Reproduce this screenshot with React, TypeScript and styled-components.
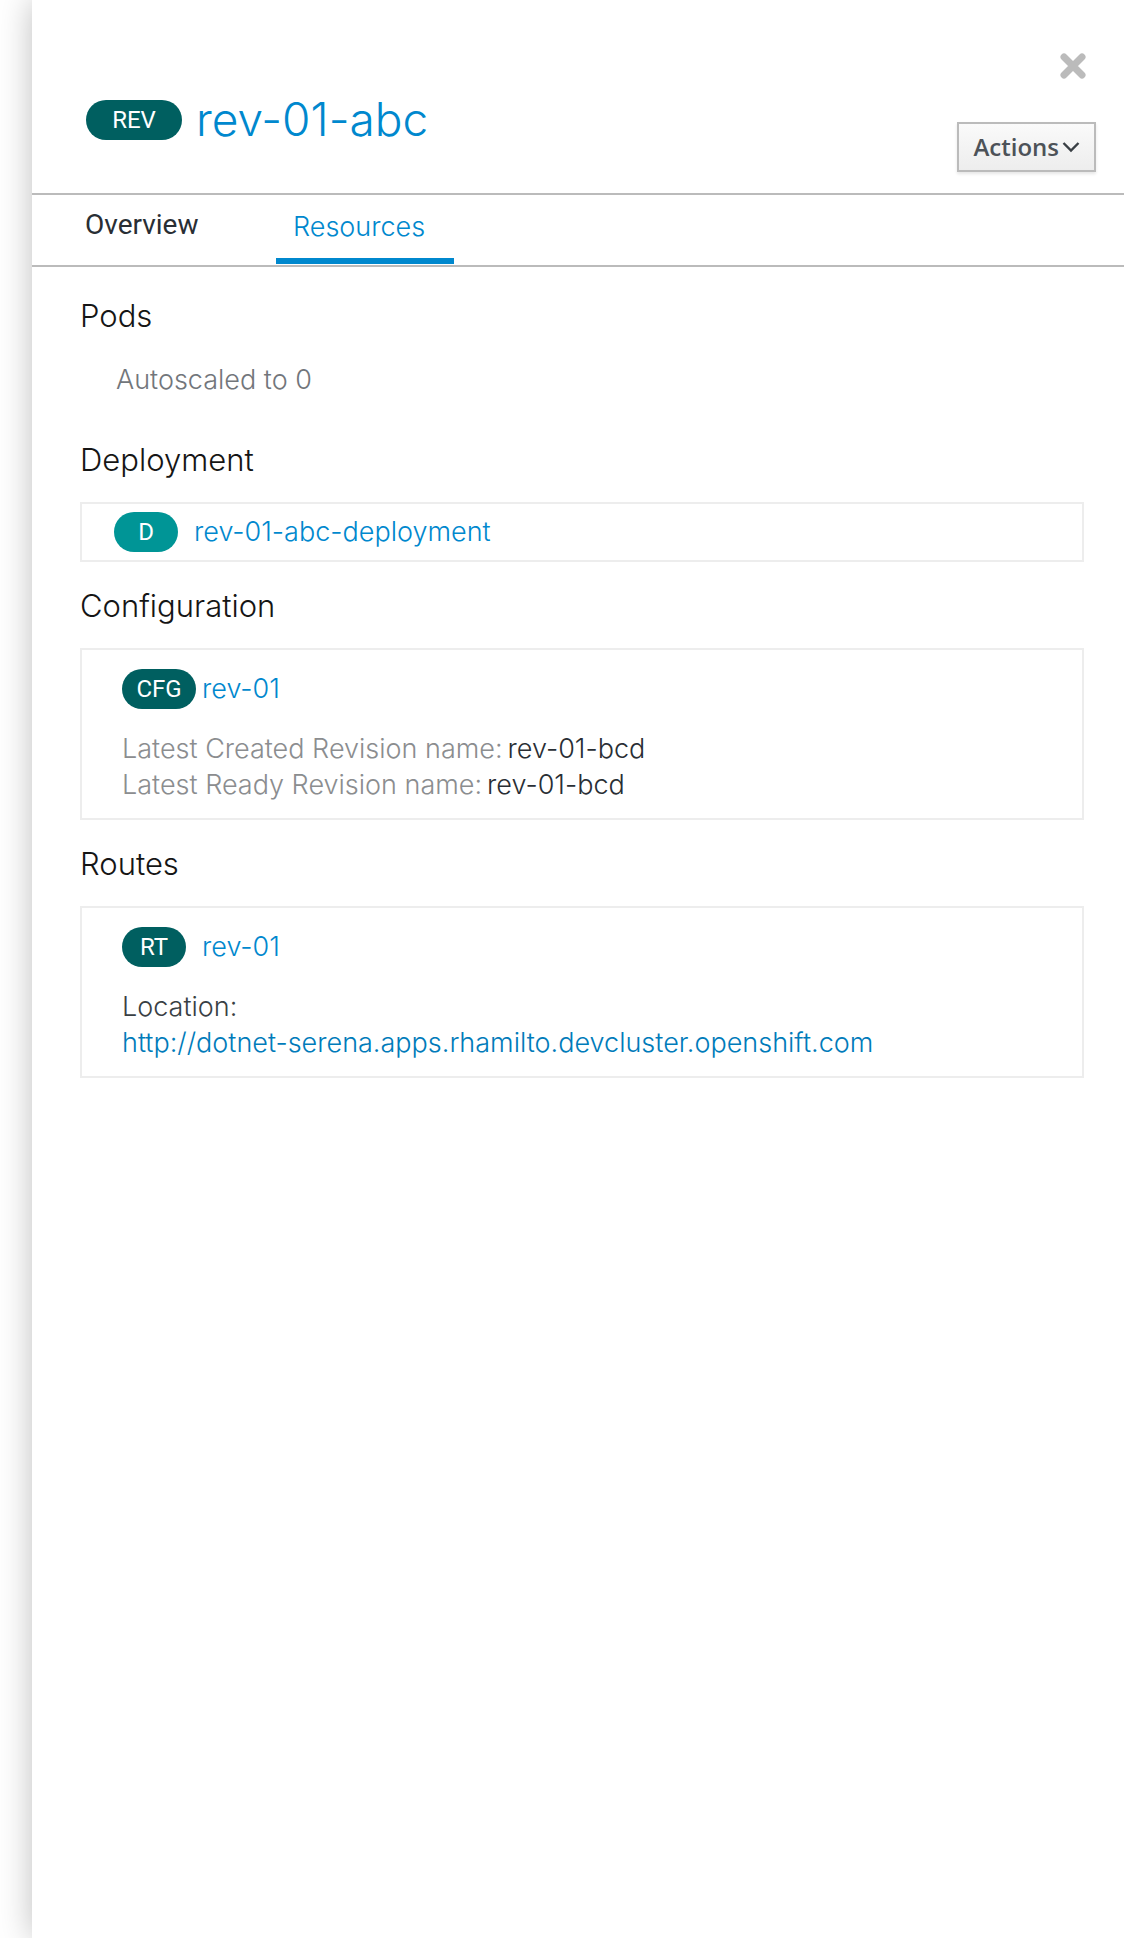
import React from "react";
import styled, { createGlobalStyle } from "styled-components";

const GlobalStyle = createGlobalStyle`
  *, *::before, *::after {
    box-sizing: border-box;
  }
  body {
    margin: 0;
    background: #fff;
    color: #151515;
    font-family: Inter, "Liberation Sans", sans-serif;
    font-weight: 300;
  }
  h1, h2, p, dl, dt, dd {
    margin: 0;
    font-weight: inherit;
  }
`;

const Page = styled.main`
  min-height: 100vh;
  padding-left: 32px;
  overflow: hidden;
`;

const Panel = styled.aside`
  min-height: 100vh;
  background: #fff;
  box-shadow: 0 0 32px rgba(0, 0, 0, 0.26);
`;

const Header = styled.header`
  display: flex;
  justify-content: space-between;
  padding: 53px 28px 21px 54px;
  border-bottom: 2px solid #bbb;
`;

const Heading = styled.div`
  display: flex;
  align-items: center;
  gap: 14px;
  height: 60px;
  margin-top: 37px;
`;

const Title = styled.h1`
  padding-bottom: 2px;
  color: #0088ce;
  font-size: 46px;
  line-height: 58px;
`;

const HeaderControls = styled.div`
  display: flex;
  flex-direction: column;
  align-items: flex-end;
  gap: 43px;
`;

const CloseButton = styled.button`
  display: flex;
  margin-right: 10px;
  padding: 0;
  border: 0;
  background: none;
  cursor: pointer;
`;

const ActionsButton = styled.button`
  display: flex;
  align-items: center;
  gap: 3px;
  height: 50px;
  padding: 0 14px;
  border: 2px solid #bbb;
  background: linear-gradient(#fafafa, #ededed);
  box-shadow: 0 2px 3px rgba(3, 3, 3, 0.1);
  color: #4d5258;
  font-family: "Open Sans", "Noto Sans", sans-serif;
  font-size: 24px;
  font-weight: 600;
  line-height: 32px;
  cursor: pointer;
`;

const Tabs = styled.nav`
  display: flex;
  align-items: stretch;
  gap: 30px;
  height: 72px;
  padding: 0 36px;
  border-bottom: 2px solid #bbb;
`;

const Tab = styled.a<{ $active?: boolean }>`
  display: block;
  min-width: 178px;
  padding: ${(p) => (p.$active ? "14px 17px 0" : "12px 17px 0")};
  border-bottom: 6px solid ${(p) => (p.$active ? "#0088ce" : "transparent")};
  margin-bottom: 1px;
  color: ${(p) => (p.$active ? "#0088ce" : "#292e34")};
  font-family: ${(p) => (p.$active ? "Inter" : "Roboto")}, sans-serif;
  font-size: ${(p) => (p.$active ? "27px" : "28px")};
  font-weight: ${(p) => (p.$active ? 300 : 400)};
  line-height: 36px;
  text-decoration: none;
`;

const Content = styled.div`
  display: flex;
  flex-direction: column;
  gap: 23px;
  padding: 28px 40px 40px 48px;
`;

const Section = styled.section`
  display: flex;
  flex-direction: column;
  gap: 21px;
`;

const SectionTitle = styled.h2`
  font-size: 31px;
  line-height: 42px;
`;

const PodStatus = styled.p`
  padding: 4px 36px 18px;
  color: #72767b;
  font-size: 27px;
  line-height: 36px;
`;

const Card = styled.div<{ $compact?: boolean }>`
  display: flex;
  flex-direction: column;
  gap: 22px;
  padding: ${(p) => (p.$compact ? "8px 32px" : "19px 40px 15px")};
  border: 2px solid #ededed;
`;

const ResourceName = styled.div<{ $tight?: boolean }>`
  display: flex;
  align-items: center;
  gap: ${(p) => (p.$tight ? "6px" : "16px")};
  height: 40px;
`;

const Badge = styled.span<{ $color?: string; $width?: number }>`
  display: flex;
  align-items: center;
  justify-content: center;
  min-width: ${(p) => p.$width ?? 64}px;
  height: 40px;
  border-radius: 20px;
  background: ${(p) => p.$color ?? "#005f60"};
  color: #fff;
  font-family: Roboto, sans-serif;
  font-size: 24px;
  font-weight: 400;
  line-height: 40px;
`;

const ResourceLink = styled.a<{ $color?: string }>`
  color: ${(p) => p.$color ?? "#0088ce"};
  font-size: 27px;
  line-height: 36px;
  text-decoration: none;
  overflow-wrap: anywhere;
`;

const Details = styled.dl`
  font-size: 27px;
  line-height: 36px;
`;

const Detail = styled.div<{ $stacked?: boolean }>`
  display: flex;
  flex-wrap: wrap;
  flex-direction: ${(p) => (p.$stacked ? "column" : "row")};
  column-gap: 5px;
`;

const Term = styled.dt<{ $dark?: boolean }>`
  color: ${(p) => (p.$dark ? "#393f44" : "#8b8d8f")};
`;

const Value = styled.dd`
  color: #292e34;
`;

function CloseIcon() {
  return (
    <svg width="26" height="26" viewBox="0 0 26 26" aria-hidden="true">
      <path d="M4 4L22 22M22 4L4 22" fill="none" stroke="#bbb" strokeWidth="7" strokeLinecap="round" />
    </svg>
  );
}

function ChevronIcon() {
  return (
    <svg width="18" height="12" viewBox="0 0 18 12" aria-hidden="true">
      <path d="M1.5 2L9 9.5L16.5 2" fill="none" stroke="#393f44" strokeWidth="2.4" />
    </svg>
  );
}

export default function App() {
  return (
    <>
      <GlobalStyle />
      <Page>
        <Panel aria-label="Revision details">
          <Header>
            <Heading>
              <Badge $width={96}>REV</Badge>
              <Title>rev-01-abc</Title>
            </Heading>
            <HeaderControls>
              <CloseButton type="button" aria-label="Close">
                <CloseIcon />
              </CloseButton>
              <ActionsButton type="button" aria-haspopup="menu">
                Actions
                <ChevronIcon />
              </ActionsButton>
            </HeaderControls>
          </Header>

          <Tabs>
            <Tab href="#overview">Overview</Tab>
            <Tab href="#resources" $active aria-current="page">
              Resources
            </Tab>
          </Tabs>

          <Content>
            <Section>
              <SectionTitle>Pods</SectionTitle>
              <PodStatus>Autoscaled to 0</PodStatus>
            </Section>

            <Section>
              <SectionTitle>Deployment</SectionTitle>
              <Card $compact>
                <ResourceName>
                  <Badge $color="#009596">D</Badge>
                  <ResourceLink href="#deployment">rev-01-abc-deployment</ResourceLink>
                </ResourceName>
              </Card>
            </Section>

            <Section>
              <SectionTitle>Configuration</SectionTitle>
              <Card>
                <ResourceName $tight>
                  <Badge $width={74}>CFG</Badge>
                  <ResourceLink href="#configuration">rev-01</ResourceLink>
                </ResourceName>
                <Details>
                  <Detail>
                    <Term>Latest Created Revision name:</Term>
                    <Value>rev-01-bcd</Value>
                  </Detail>
                  <Detail>
                    <Term>Latest Ready Revision name:</Term>
                    <Value>rev-01-bcd</Value>
                  </Detail>
                </Details>
              </Card>
            </Section>

            <Section>
              <SectionTitle>Routes</SectionTitle>
              <Card>
                <ResourceName>
                  <Badge>RT</Badge>
                  <ResourceLink href="#route">rev-01</ResourceLink>
                </ResourceName>
                <Details>
                  <Detail $stacked>
                    <Term $dark>Location:</Term>
                    <Value>
                      <ResourceLink
                        $color="#007bba"
                        href="http://dotnet-serena.apps.rhamilto.devcluster.openshift.com"
                      >
                        http://dotnet-serena.apps.rhamilto.devcluster.openshift.com
                      </ResourceLink>
                    </Value>
                  </Detail>
                </Details>
              </Card>
            </Section>
          </Content>
        </Panel>
      </Page>
    </>
  );
}
